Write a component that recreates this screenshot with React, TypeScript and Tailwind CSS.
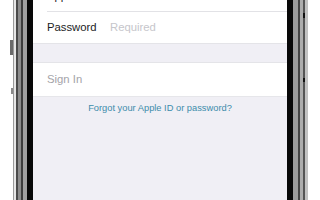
export default function App() {
  return (
    <div className="flex w-[320px] h-[200px] overflow-hidden bg-white" style={{ fontFamily: '"Liberation Sans", Arial, sans-serif' }}>
      <LeftBezel />
      <Screen />
      <RightBezel />
    </div>
  )
}

function LeftBezel() {
  return (
    <div className="flex h-full shrink-0">
      <div className="w-[13px] flex flex-col">
        <div className="h-[40px]" />
        <div className="h-[15px] ml-[10px] w-[3px] bg-[#6a6a6a]" />
        <div className="h-[33px]" />
        <div className="h-[6px] ml-[11px] w-[2px] bg-[#8a8a8a]" />
      </div>
      <div className="w-px bg-[#9a9a9a]" />
      <div className="w-[2px] bg-[#e6e6e6]" />
      <div className="w-[2px] bg-[#4a4a4a]" />
      <div className="w-[3px] bg-[#8c8c8c]" />
      <div className="w-[2px] bg-[#3e3e3e]" />
      <div className="w-[4px] bg-[#a2a2a2]" />
      <div className="w-[6px] bg-[#080808]" />
    </div>
  )
}

function RightBezel() {
  return (
    <div className="flex h-full shrink-0">
      <div className="w-[6px] bg-[#080808]" />
      <div className="w-[5px] bg-[#9c9c9c]" />
      <div className="w-[2px] bg-[#444]" />
      <div className="w-[3px] bg-[#adadad]" />
      <div className="w-[2px] bg-[#555] flex flex-col">
        <div className="h-[13px]" />
        <div className="h-[5px] bg-[#111]" />
        <div className="h-[60px]" />
        <div className="h-[4px] bg-[#111]" />
      </div>
      <div className="w-[3px] bg-[#c2c2c2]" />
      <div className="w-[12px] bg-white" />
    </div>
  )
}

function Screen() {
  return (
    <div className="w-[254px] h-full bg-[#f0eff5] flex flex-col shrink-0">
      <div className="bg-white mt-[-19px] pl-[14px]">
        <div className="h-[31px] flex items-center border-b border-[#e2e2e6]">
          <span className="w-[63px] text-[11.3px] text-[#1c1c1e]">Apple ID</span>
        </div>
        <div className="h-[31px] flex items-center">
          <span className="w-[63px] text-[11.3px] text-[#1c1c1e]">Password</span>
          <span className="text-[11.3px] text-[#c6c6cb]">Required</span>
        </div>
      </div>
      <div className="h-[20px] border-t border-[#e4e4e8] border-b" />
      <div className="bg-white h-[33px] pl-[14px] flex items-center">
        <span className="text-[11.3px] text-[#a4a4a9]">Sign In</span>
      </div>
      <div className="border-t border-[#e6e6ea] pt-[5px] flex justify-center">
        <span className="text-[9.3px] text-[#3d8cab]">Forgot your Apple ID or password?</span>
      </div>
    </div>
  )
}
